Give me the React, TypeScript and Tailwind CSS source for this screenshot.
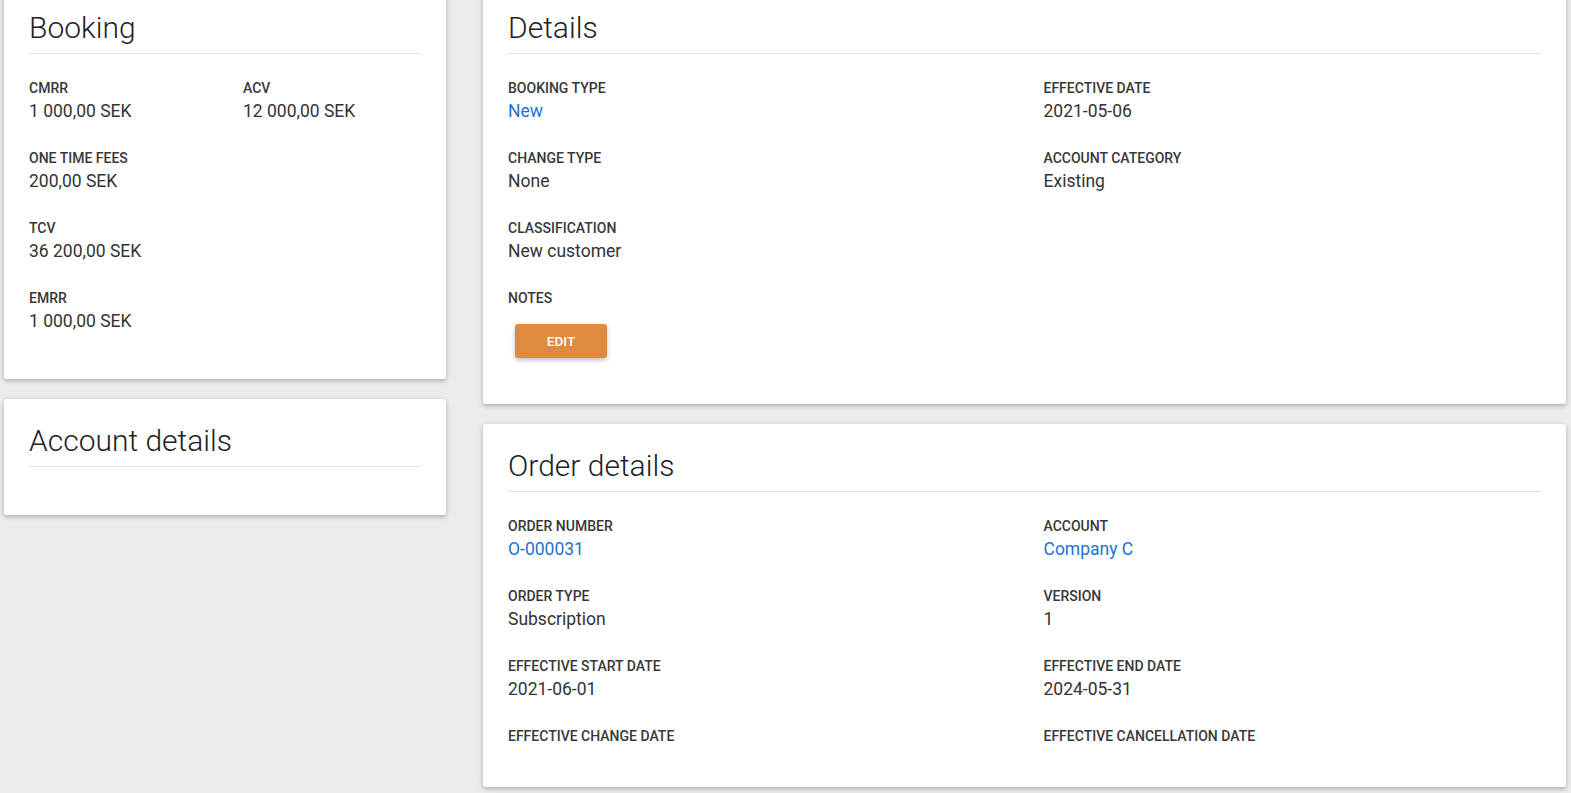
import React from "react";

type F = { label: string; value?: React.ReactNode; link?: boolean };

const labelCls = "text-[14px] leading-[20px] font-medium uppercase text-[#383838]";

function Field({ label, value, link }: F) {
  return (
    <div className="mb-[24px]">
      <div className={labelCls}>{label}</div>
      <div className={`text-[17.5px] leading-[26px] ${link ? "text-[#1e72d6]" : "text-[#333333]"}`}>{value}</div>
    </div>
  );
}

function Card({ title, children, className = "" }: { title: string; children?: React.ReactNode; className?: string }) {
  return (
    <div className={`bg-white rounded-[3px] shadow-[0_2px_4px_rgba(0,0,0,0.22),0_1px_10px_rgba(0,0,0,0.06)] pl-[25px] pr-[25px] pt-[24px] pb-[21px] ${className}`}>
      <h2 className="text-[30px] leading-[36px] font-light text-[#222222] pb-[7px] border-b border-[#e2e2e2]">{title}</h2>
      <div className="pt-[24px]">{children}</div>
    </div>
  );
}

export default function App() {
  return (
    <div className="min-h-[793px] bg-[#ececec] overflow-hidden" style={{ fontFamily: "Roboto, 'Liberation Sans', sans-serif" }}>
      <div className="flex gap-[37px] pl-[4px] pr-[5px] -mt-[14px]">
        <div className="w-[442px] flex flex-col gap-[20px] shrink-0">
          <Card title="Booking" className="pr-[26px]">
            <div className="grid grid-cols-[176px_1fr] gap-x-[38px]">
              <Field label="CMRR" value="1 000,00 SEK" />
              <Field label="ACV" value="12 000,00 SEK" />
              <Field label="One time fees" value="200,00 SEK" />
              <div />
              <Field label="TCV" value="36 200,00 SEK" />
              <div />
              <Field label="EMRR" value="1 000,00 SEK" />
            </div>
          </Card>
          <Card title="Account details" className="pr-[26px]">
            <div className="h-[3px]" />
          </Card>
        </div>
        <div className="flex-1 flex flex-col gap-[20px]">
          <Card title="Details">
            <div className="grid grid-cols-2 gap-x-[38px]">
              <Field label="Booking type" value="New" link />
              <Field label="Effective date" value="2021-05-06" />
              <Field label="Change type" value="None" />
              <Field label="Account category" value="Existing" />
              <Field label="Classification" value="New customer" />
              <div />
              <div className="mb-[25px]">
                <div className={labelCls}>Notes</div>
                <button className="mt-[16px] ml-[7px] w-[92px] h-[34px] rounded-[3px] bg-[#de8a3f] text-white text-[13.5px] font-medium uppercase shadow-[0_2px_5px_rgba(0,0,0,0.26)]">
                  Edit
                </button>
              </div>
            </div>
          </Card>
          <Card title="Order details">
            <div className="grid grid-cols-2 gap-x-[38px]">
              <Field label="Order number" value="O-000031" link />
              <Field label="Account" value="Company C" link />
              <Field label="Order type" value="Subscription" />
              <Field label="Version" value="1" />
              <Field label="Effective start date" value="2021-06-01" />
              <Field label="Effective end date" value="2024-05-31" />
              <div className="mb-[20px]"><div className={labelCls}>Effective change date</div></div>
              <div className="mb-[20px]"><div className={labelCls}>Effective cancellation date</div></div>
            </div>
          </Card>
        </div>
      </div>
    </div>
  );
}
